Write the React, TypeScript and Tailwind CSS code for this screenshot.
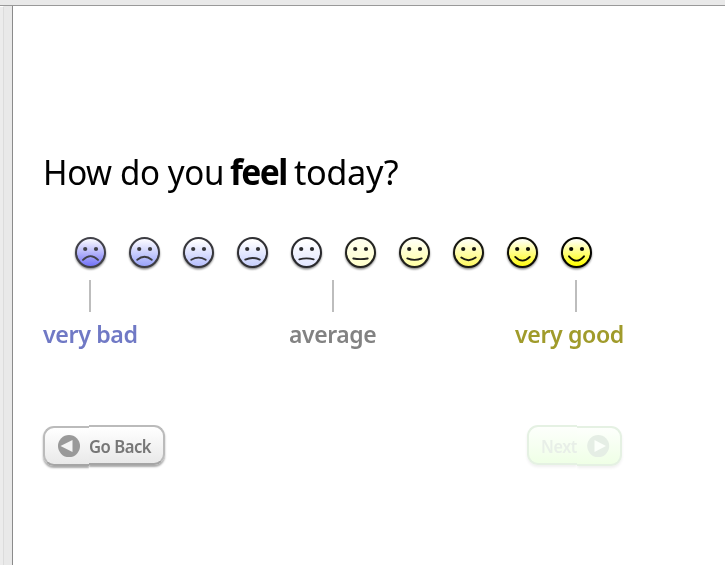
import React from "react";

const faces = [
  { top: "#f4f4ff", bottom: "#7575f8", ink: "#414149", mouth: "M9 23.9 Q16.5 16.3 24 23.9" },
  { top: "#f8f8ff", bottom: "#9ba5fa", ink: "#3c3c42", mouth: "M9.3 23.8 Q16.5 17.9 23.7 23.8" },
  { top: "#ffffff", bottom: "#b9c1fc", ink: "#37373c", mouth: "M9.3 23.7 Q16.5 19.5 23.7 23.7" },
  { top: "#ffffff", bottom: "#c9d1fc", ink: "#303034", mouth: "M9.3 23.6 Q16.5 20.3 23.7 23.6" },
  { top: "#ffffff", bottom: "#e3e7ff", ink: "#29292d", mouth: "M9.3 23.3 Q16.5 21.5 23.7 23.3" },
  { top: "#ffffee", bottom: "#ffffcc", ink: "#242420", mouth: "M9.3 22.5 Q16.5 23.8 23.7 22.5" },
  { top: "#fffff4", bottom: "#ffffa5", ink: "#20201c", mouth: "M9.3 22.4 Q16.5 25.4 23.7 22.4" },
  { top: "#fffff0", bottom: "#fffa65", ink: "#181812", mouth: "M9.3 21.6 Q16.5 26.8 23.7 21.6" },
  { top: "#fffff0", bottom: "#fffb16", ink: "#100f08", mouth: "M9.2 20.9 Q16.5 28.4 23.8 20.9" },
  { top: "#fffff0", bottom: "#ffff00", ink: "#050500", mouth: "M9 20.3 Q16.5 29 24 20.3" },
];

function Face({ index }: { index: number }) {
  const f = faces[index];
  return (
    <svg width="33" height="38" viewBox="0 0 33 38" className="block shrink-0 overflow-visible">
      <defs>
        <linearGradient id={`face${index}`} x1="0" y1="0" x2="0" y2="1">
          <stop offset="0.08" stopColor={f.top} />
          <stop offset="0.95" stopColor={f.bottom} />
        </linearGradient>
        <filter id={`soft${index}`} x="-30%" y="-30%" width="160%" height="160%">
          <feGaussianBlur stdDeviation="1.3" />
        </filter>
      </defs>
      <circle cx="16.5" cy="18" r="15.2" fill="#000" opacity="0.55" filter={`url(#soft${index})`} />
      <circle cx="16.5" cy="16.5" r="14.5" fill={`url(#face${index})`} stroke={f.ink} strokeWidth="2" />
      <circle cx="11.2" cy="13" r="2.1" fill={f.ink} />
      <circle cx="22" cy="13" r="2.1" fill={f.ink} />
      <path d={f.mouth} fill="none" stroke={f.ink} strokeWidth="1.9" strokeLinecap="round" />
    </svg>
  );
}

function Label({ text, className, tick, scale }: { text: string; className: string; tick: string; scale: string }) {
  return (
    <div className={`flex flex-col ${className}`}>
      <div className={`h-8 w-0.5 bg-[#bdbdbd] ${tick}`} />
      <span className={`mt-[6px] origin-left whitespace-nowrap text-[24px] leading-8 font-semibold tracking-[-0.4px] ${scale}`}>{text}</span>
    </div>
  );
}

export default function App() {
  return (
    <div className="flex h-[565px] w-[725px] flex-col overflow-hidden bg-white font-['Noto_Sans','Open_Sans',sans-serif]">
      <header className="h-1.5 shrink-0 border-b border-[#999] bg-[#e9e9e9]" />
      <div className="flex min-h-0 flex-1">
        <aside className="flex w-[13px] shrink-0 border-r border-[#8b8b8b] bg-[#e9e9e9]">
          <div className="w-1 border-r border-[#dcdcdc] border-t border-t-white bg-[#ececec]" />
        </aside>
        <main className="flex flex-col pl-[30px] pt-[141px]">
          <h1 className="flex h-[50px] whitespace-nowrap text-[35px] leading-[50px] text-black">
            <span className="w-[187px] origin-left scale-x-[0.945] tracking-[-0.4px]">How do you</span>
            <span className="w-[64px] origin-left scale-x-[0.96] font-bold tracking-[-1.7px]">feel</span>
            <span className="origin-left scale-x-[0.98] tracking-[-0.4px]">today?</span>
          </h1>
          <div className="ml-[31px] mt-[39px] flex h-[38px] gap-[21px]">
            {faces.map((_, i) => <Face key={i} index={i} />)}
          </div>
          <div className="mt-[6px] flex h-[71px]">
            <Label text="very bad" className="w-[95px] text-[#7079c5]" tick="ml-[46px]" scale="scale-x-[0.968]" />
            <Label text="average" className="ml-[151px] w-[88px] text-[#828282]" tick="ml-[43px]" scale="scale-x-[0.955]" />
            <Label text="very good" className="ml-[138px] w-[110px] text-[#a09b2b]" tick="ml-[60px]" scale="scale-x-[0.963]" />
          </div>
          <div className="mt-[74px] flex h-[44px]">
            <button className="flex h-[42px] w-[122px] text-[#777]">
              <span className="mt-px flex h-[40px] w-[46px] items-center rounded-l-[11px] border-2 border-r-0 border-[#bbb] border-b-[#a5a5a5] bg-linear-to-b from-white to-[#e9e9e9] pl-3 shadow-[0_2px_2px_#aaa] [clip-path:inset(-6px_0_-6px_-6px)]">
                <svg width="23" height="23" viewBox="0 0 23 23" className="shrink-0"><circle cx="12" cy="11.1" r="11" fill="#999" /><path d="M15.5 5v12L3.5 11z" fill="#f4f4f4" /></svg>
              </span>
              <span className="flex h-[40px] w-[76px] items-center whitespace-nowrap rounded-r-[11px] border-2 border-l-0 border-[#bbb] border-b-[#a5a5a5] bg-linear-to-b from-white to-[#e9e9e9] pt-[3px] text-[17px] font-semibold shadow-[0_2px_2px_#aaa] [clip-path:inset(-6px_-6px_-6px_0)]"><span className="origin-left scale-x-[0.98] tracking-[-0.5px]">Go Back</span></span>
            </button>
            <button className="ml-[362px] flex h-[42px] w-[95px] text-[#e8efe8]">
              <span className="flex h-[40px] w-[50px] items-center whitespace-nowrap rounded-l-[11px] border-2 border-r-0 border-[#e5f1e3] bg-linear-to-b from-[#fdfffc] to-[#efffe6] pl-3 pt-[3px] text-[17px] font-semibold shadow-[0_2px_3px_#f0f0f0] [clip-path:inset(-6px_0_-6px_-6px)]"><span className="origin-left scale-x-[0.95] tracking-[-0.4px]">Next</span></span>
              <span className="mt-px flex h-[40px] w-[45px] items-center rounded-r-[11px] border-2 border-l-0 border-[#e5f1e3] bg-linear-to-b from-[#fdfffc] to-[#efffe6] pl-2.5 shadow-[0_2px_3px_#f0f0f0] [clip-path:inset(-6px_-6px_-6px_0)]">
                <svg width="23" height="23" viewBox="0 0 23 23" className="shrink-0"><circle cx="11.2" cy="11.1" r="11" fill="#e5eee5" /><path d="M7.5 5v12L19 11z" fill="#fbfffa" /></svg>
              </span>
            </button>
          </div>
        </main>
      </div>
    </div>
  );
}
